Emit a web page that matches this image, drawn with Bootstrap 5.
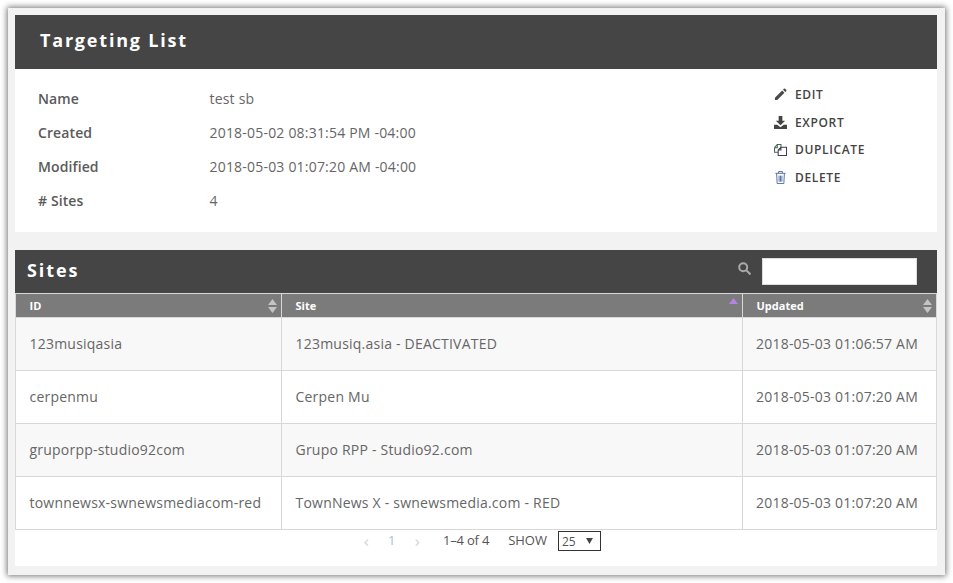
<!DOCTYPE html>
<html lang="en">
<head>
    <meta charset="UTF-8">
    <meta name="viewport" content="width=device-width, initial-scale=1.0">
    <title>Targeting List</title>
    <link href="https://cdn.jsdelivr.net/npm/bootstrap@5.3.0/dist/css/bootstrap.min.css" rel="stylesheet">
    <style>
        html, body { height: 100%; }
        body {
            background: #fff;
            font-family: "Open Sans", sans-serif;
            font-size: 14px;
            color: #5c5c5c;
            overflow: hidden;
        }
        .shell {
            margin: 8px 0 0 8px;
            width: 937px;
            height: 567px;
            padding: 7px 8px 9px 7px;
            background: #f2f2f2;
            box-shadow: 0 0 6px 1px rgba(0, 0, 0, 0.55);
        }
        .panel-top { background: #fff; height: 217px; margin-bottom: 18px; }
        .panel-head {
            background: #454545;
            color: #fff;
            font-weight: 700;
        }
        .head-main { height: 54px; padding-left: 25px; font-size: 18px; line-height: 51px; letter-spacing: 1.8px; }
        .info-wrap { padding: 13px 0 0 23px; }
        .info-row { height: 34px; line-height: 34px; }
        .info-key { width: 171.5px; font-weight: 600; color: #5a5a5a; letter-spacing: 0.1px; }
        .info-val { color: #666; letter-spacing: 0.2px; }
        .action-list { width: 163px; padding-top: 11.7px; }
        .action-item {
            height: 27.6px;
            line-height: 27px;
            font-size: 12px;
            font-weight: 600;
            color: #444;
            letter-spacing: 0.65px;
        }
        .action-item svg { width: 13px; height: 13px; margin-right: 8px; flex: none; }
        .head-sites { height: 43px; padding: 0 20px 2px 12px; font-size: 18px; letter-spacing: 1.9px; }
        .search-icon { margin-bottom: 5px; }
        .search-box {
            width: 155px;
            height: 27px;
            margin-left: 11px;
            margin-top: 2px;
            background: #fff;
            border: 1px solid #ddd;
        }
        .panel-bottom { background: #fff; height: 316px; }
        .sites-table {
            width: 921px;
            table-layout: fixed;
            margin: 0;
            border-collapse: collapse;
            --bs-table-color: #5c5c5c;
            --bs-table-bg: transparent;
        }
        .sites-table th {
            background: #7b7b7b;
            color: #fff;
            font-size: 11px;
            font-weight: 700;
            height: 24px;
            padding: 1px 13.5px 0;
            border: 1px solid #d8d8d8;
            position: relative;
            vertical-align: middle;
        }
        .sites-table td {
            height: 53px;
            padding: 0 13.5px 2px;
            border: 1px solid #d8d8d8;
            vertical-align: middle;
            white-space: nowrap;
            color: #666;
            background: #fff;
            letter-spacing: 0.22px;
        }
        .sites-table td:nth-child(3) { padding-left: 13px; }
        .sites-table tbody tr:nth-child(odd) td { background: #f8f8f8; }
        .sort-mark { position: absolute; right: 4px; top: 4px; width: 9px; height: 16px; }
        .pager-row { height: 36px; font-size: 13px; padding-left: 338.5px; padding-bottom: 14px; }
        .pager-off { color: #d4d4d4; width: 25.5px; text-align: center; font-size: 17px; line-height: 20px; }
        .pager-cur { color: #a9c0cc; width: 25.5px; text-align: center; }
        .pager-count { color: #555; margin-left: 13px; letter-spacing: -0.2px; }
        .pager-show { margin-left: 19px; color: #555; }
        .page-pick {
            width: 43px;
            height: 20px;
            margin-left: 11px;
            border: 1px solid #333;
            padding: 2px 0 0 3px;
            font-size: 12px;
            color: #555;
        }
        .page-pick svg { width: 7px; height: 6px; margin: -2px 7px 0 0; }
    </style>
</head>
<body>
    <div class="shell">
        <div class="panel-top">
            <div class="panel-head head-main">Targeting List</div>
            <div class="d-flex justify-content-between">
                <div class="info-wrap">
                    <div class="d-flex info-row"><div class="info-key">Name</div><div class="info-val">test sb</div></div>
                    <div class="d-flex info-row"><div class="info-key">Created</div><div class="info-val">2018-05-02 08:31:54 PM -04:00</div></div>
                    <div class="d-flex info-row"><div class="info-key">Modified</div><div class="info-val">2018-05-03 01:07:20 AM -04:00</div></div>
                    <div class="d-flex info-row"><div class="info-key"># Sites</div><div class="info-val">4</div></div>
                </div>
                <div class="action-list">
                    <div class="d-flex align-items-center action-item">
                        <svg viewBox="0 0 14 14"><path fill="#4a4a4a" d="M1 10.500 8.800 2.700l2.500 2.500-7.800 7.800H1zM9.700 1.800l.9-.9a1 1 0 0 1 1.400 0l1.100 1.100a1 1 0 0 1 0 1.400l-.9.9z"/></svg>EDIT
                    </div>
                    <div class="d-flex align-items-center action-item">
                        <svg viewBox="0 0 14 14"><path fill="#444" d="M5 0h4v5h3L7 10 2 5h3zM0 9.500h3.500L7 12l3.500-2.500H14V14H0z"/></svg>EXPORT
                    </div>
                    <div class="d-flex align-items-center action-item">
                        <svg viewBox="0 0 14 14" fill="none" stroke-width="1.100"><path stroke="#3f6a50" d="M.5 5 3.500 1.500h4v3M.5 5v5h4M.5 5h3V2"/><path stroke="#443a50" d="M4.500 7.500 7.500 4.500h6v9h-9zM4.500 7.500h3v-3"/></svg>DUPLICATE
                    </div>
                    <div class="d-flex align-items-center action-item">
                        <svg viewBox="0 0 14 14" fill="none" stroke="#4f6aa0" stroke-width="1"><path d="M1.500 2.500h11M5 2.500v-2h4v2M2.800 2.500l.6 11h7.200l.6-11M5.500 5v6.500M7 5v6.500M8.500 5v6.500"/></svg>DELETE
                    </div>
                </div>
            </div>
        </div>
        <div class="panel-bottom">
            <div class="panel-head head-sites d-flex align-items-center justify-content-between">
                <span>Sites</span>
                <div class="d-flex align-items-center">
                    <svg class="search-icon" width="13" height="13" viewBox="0 0 13 13" fill="none" stroke="#a9a9a9" stroke-width="2"><circle cx="5.200" cy="5.200" r="4"/><path d="m8 8 4.500 4.500"/></svg>
                    <div class="search-box"></div>
                </div>
            </div>
            <table class="table sites-table">
                <colgroup><col style="width:266px"><col style="width:461px"><col style="width:194px"></colgroup>
                <thead>
                    <tr>
                        <th>ID<svg class="sort-mark" viewBox="0 0 9 16"><path fill="#c4c4c4" d="M4.500 1 9 7H0zM4.500 15 0 9h9z"/></svg></th>
                        <th>Site<svg class="sort-mark" viewBox="0 0 9 16"><path fill="#b583e0" d="M4.500 0 9 6H0z"/></svg></th>
                        <th>Updated<svg class="sort-mark" viewBox="0 0 9 16"><path fill="#c4c4c4" d="M4.500 1 9 7H0zM4.500 15 0 9h9z"/></svg></th>
                    </tr>
                </thead>
                <tbody>
                    <tr><td>123musiqasia</td><td>123musiq.asia - DEACTIVATED</td><td>2018-05-03 01:06:57 AM</td></tr>
                    <tr><td>cerpenmu</td><td>Cerpen Mu</td><td>2018-05-03 01:07:20 AM</td></tr>
                    <tr><td>gruporpp-studio92com</td><td>Grupo RPP - Studio92.com</td><td>2018-05-03 01:07:20 AM</td></tr>
                    <tr><td>townnewsx-swnewsmediacom-red</td><td>TownNews X - swnewsmedia.com - RED</td><td>2018-05-03 01:07:20 AM</td></tr>
                </tbody>
            </table>
            <div class="d-flex align-items-center pager-row">
                <span class="pager-off">‹</span>
                <span class="pager-cur">1</span>
                <span class="pager-off">›</span>
                <span class="pager-count">1–4 of 4</span>
                <span class="pager-show">SHOW</span>
                <div class="d-flex align-items-center justify-content-between page-pick">
                    <span>25</span>
                    <svg viewBox="0 0 8 7"><path fill="#444" d="M0 0h8L4 7z"/></svg>
                </div>
            </div>
        </div>
    </div>
    <script src="https://cdn.jsdelivr.net/npm/bootstrap@5.3.0/dist/js/bootstrap.bundle.min.js"></script>
</body>
</html>
